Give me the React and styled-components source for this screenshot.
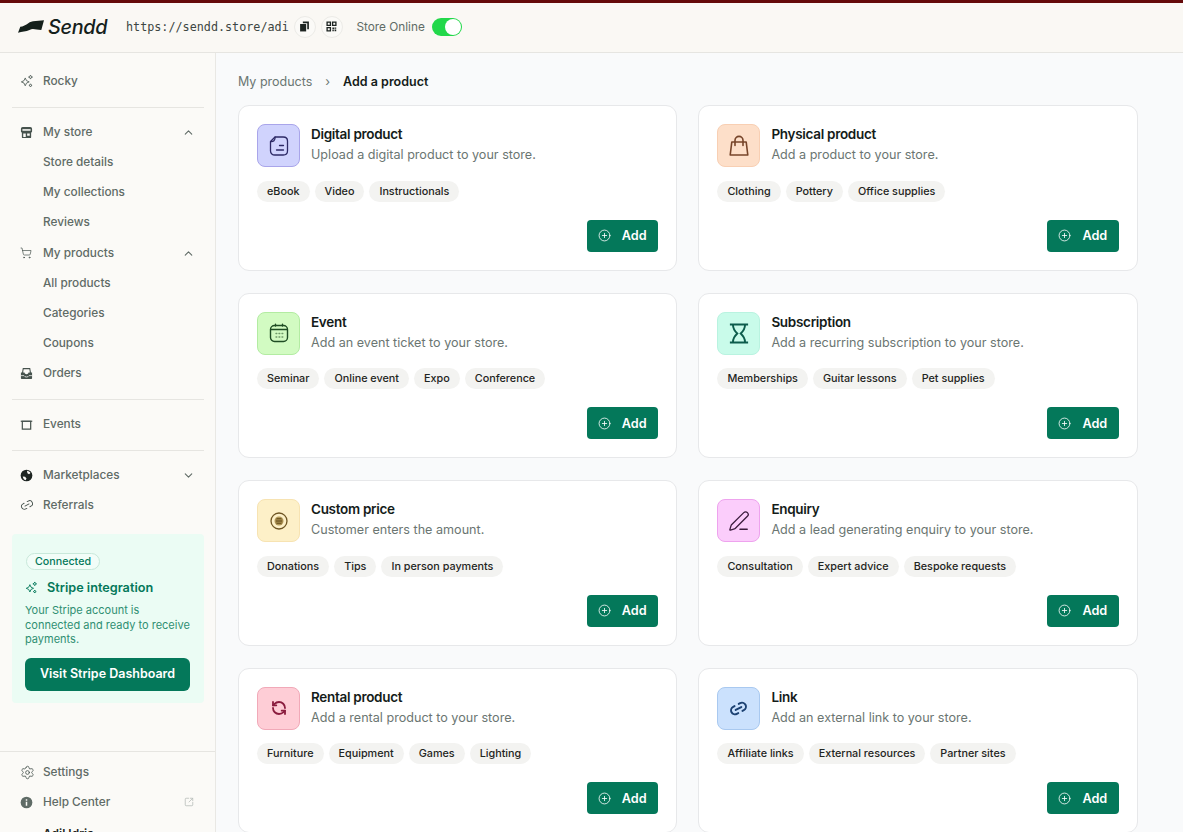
import React from 'react'
import styled, { createGlobalStyle } from 'styled-components'
import {
  ChevronUp, ChevronDown, ShoppingCart, Link2, Settings, SquareArrowOutUpRight,
  CirclePlus, PenLine, RefreshCcw,
} from 'lucide-react'

const Global = createGlobalStyle`
  html, body { margin: 0; padding: 0; height: 100%; overflow: hidden; }
  body { font-family: Inter, "Liberation Sans", sans-serif; background: #fbfaf7; }
  * { box-sizing: border-box; }
`

const Chain = styled(Link2)`
  transform: rotate(-28deg);
`

const Sparkle = ({ size = 14, color = 'currentColor' }) => (
  <svg width={size} height={size} viewBox="0 0 16 16" fill="none" stroke={color} strokeWidth="1.1" strokeLinejoin="round">
    <path d="M6 4.5 7.4 7.6 10.5 9 7.4 10.4 6 13.500 4.600 10.400 1.500 9 4.600 7.600Z" />
    <path d="M12 1.200 12.700 2.800 14.300 3.500 12.700 4.200 12 5.800 11.300 4.200 9.700 3.500 11.300 2.800Z" />
    <path d="M12 11.200 12.600 12.400 13.800 13 12.600 13.600 12 14.800 11.400 13.600 10.200 13 11.400 12.400Z" />
  </svg>
)

const StoreIcon = () => (
  <svg width="13" height="13" viewBox="0 0 14 14" fill="#46524d">
    <path d="M3 1h8c1.300 0 2 1 2 2.200v2.600c0 .7-.4 1.200-1 1.300V12c0 .6-.4 1-1 1H3c-.6 0-1-.4-1-1V7.100c-.6-.1-1-.6-1-1.300V3.200C1 2 1.700 1 3 1Z" />
    <path d="M2.600 3.400h8.800v1.700H2.600Z" fill="#fbfaf7" />
    <path d="M3.500 8.200h2.700v3.600H3.500ZM7.700 8.200h2.800v2.200H7.700Z" fill="#fbfaf7" />
  </svg>
)

const OrdersIcon = () => (
  <svg width="13" height="13" viewBox="0 0 14 14" fill="#46524d">
    <path d="M3 1h8l.8 5H13v6.200c0 .5-.3.800-.8.800H1.800c-.5 0-.8-.3-.8-.8V6h1.200Z" />
    <path d="M3.900 2.500h6.200l.5 3.500H9.200c-.3 1.200-1.100 1.800-2.200 1.800S5.100 7.200 4.800 6H3.400Z" fill="#fbfaf7" />
    <path d="M1 9.300h3.300c.5 1 1.500 1.500 2.700 1.500s2.200-.5 2.700-1.500H13" stroke="#fbfaf7" strokeWidth=".8" fill="none" />
  </svg>
)

const EventsIcon = () => (
  <svg width="13" height="13" viewBox="0 0 14 14" fill="none" stroke="#46524d" strokeWidth="1.300">
    <path d="M2.500 3.500h9v8.500h-9Z" />
    <path d="M.8 3.500h12.400" />
  </svg>
)

const GlobeIcon = () => (
  <svg width="13" height="13" viewBox="0 0 14 14">
    <circle cx="7" cy="7" r="6.300" fill="#1d2421" />
    <path d="M7.500 1.800c1.500.2 3 1 3.800 2.400L9.700 5.600 8 4.700ZM3 8l2.500.3L7 10.200 6 12C4.400 11.600 3.200 10 3 8Z" fill="#fbfaf7" />
  </svg>
)

const InfoIcon = () => (
  <svg width="13" height="13" viewBox="0 0 14 14">
    <circle cx="7" cy="7" r="6.300" fill="#5f6b66" />
    <path d="M6.200 6.200h1.600v4.200H6.200ZM6.200 3.600h1.600v1.500H6.200Z" fill="#fbfaf7" />
  </svg>
)

const CopyIcon = () => (
  <svg width="11" height="11" viewBox="0 0 10 10" fill="#1d2421">
    <path d="M3.500 .5H9v7H7.500V2H3.500Z" />
    <path d="M1 2.700h5.500v6.800H1Z" />
  </svg>
)

const QrIcon = () => (
  <svg width="11" height="11" viewBox="0 0 10 10" fill="none" stroke="#1d2421" strokeWidth="1.200">
    <path d="M1 1h3v3H1ZM6 1h3v3H6ZM1 6h3v3H1Z" />
    <path d="M5.800 5.800h1.600v1.600H5.800ZM7.800 7.800h1.500v1.500H7.800ZM7.800 5.800h1.500v1.300H7.800ZM5.800 7.900h1.300v1.400H5.800Z" fill="#1d2421" stroke="none" />
  </svg>
)

const NoteIcon = () => (
  <svg width="20" height="20" viewBox="0 0 20 20" fill="none" stroke="#2d2a66" strokeWidth="1.300" strokeLinecap="round" strokeLinejoin="round">
    <path d="M6 1h8.200c2.300 0 4.300 1.500 4.300 4v10c0 2.500-2 4-4.300 4H5.800c-2.300 0-4.300-1.500-4.300-4V5.500Z" />
    <path d="M1.600 5.600c2.800.3 4.700-1.200 4.500-4.500" />
    <path d="M10.500 9.500h4M7.500 14h7" />
  </svg>
)

const BagIcon = () => (
  <svg width="22" height="22" viewBox="0 0 22 22" fill="none" stroke="#77452a" strokeWidth="1.600" strokeLinejoin="round" strokeLinecap="round">
    <path d="M3.800 7h14.400l1.600 13H2.200Z" />
    <path d="M7 10.500V5.200C7 3 8.800 1.400 11 1.400s4 1.600 4 3.800v5.300" />
  </svg>
)

const CalIcon = () => (
  <svg width="20" height="20" viewBox="0 0 20 20" fill="none" stroke="#1f4d24" strokeWidth="1.400" strokeLinecap="round">
    <rect x="1.500" y="2.500" width="17" height="16" rx="4" />
    <path d="M2 6.500h16M6.500 1.200V3M13.500 1.200V3" />
    <path d="M7 10.500h.8M10 10.500h.8M13 10.500h.8M7 14h.8M10 14h.8M13 14h.8" stroke="#6f9a68" />
  </svg>
)

const HourIcon = () => (
  <svg width="20" height="21" viewBox="0 0 20 21" fill="none" stroke="#0d5c4c" strokeLinecap="square">
    <path d="M2 1.500h16M2 19.500h16" strokeWidth="2.200" />
    <path d="M4 2c0 3.800 2.200 6.500 4.300 8.500C6.200 12.500 4 15.200 4 19M16 2c0 3.800-2.200 6.500-4.300 8.500 2.100 2 4.300 4.700 4.300 8.500" strokeWidth="1.900" />
  </svg>
)

const CoinIcon = () => (
  <svg width="20" height="20" viewBox="0 0 20 20" fill="none" stroke="#6e5523" strokeWidth="1.300">
    <circle cx="10" cy="10" r="8" />
    <circle cx="10" cy="10" r="4.500" fill="#b09758" stroke="none" />
    <path d="M7.500 7.600h5M6.800 9.200h6.400M6.800 10.800h6.400M7.500 12.400h5" stroke="#6e5523" strokeWidth="1" />
  </svg>
)

const cards = [
  { title: 'Digital product', desc: 'Upload a digital product to your store.', tags: ['eBook', 'Video', 'Instructionals'], bg: '#d0d3fd', line: '#a9a5ea', icon: <NoteIcon /> },
  { title: 'Physical product', desc: 'Add a product to your store.', tags: ['Clothing', 'Pottery', 'Office supplies'], bg: '#fddfc9', line: '#f8cfb3', icon: <BagIcon /> },
  { title: 'Event', desc: 'Add an event ticket to your store.', tags: ['Seminar', 'Online event', 'Expo', 'Conference'], bg: '#d2fbc2', line: '#b3eca2', icon: <CalIcon /> },
  { title: 'Subscription', desc: 'Add a recurring subscription to your store.', tags: ['Memberships', 'Guitar lessons', 'Pet supplies'], bg: '#c9fbea', line: '#b9f3e0', icon: <HourIcon /> },
  { title: 'Custom price', desc: 'Customer enters the amount.', tags: ['Donations', 'Tips', 'In person payments'], bg: '#fdf0c8', line: '#f7e3b2', icon: <CoinIcon /> },
  { title: 'Enquiry', desc: 'Add a lead generating enquiry to your store.', tags: ['Consultation', 'Expert advice', 'Bespoke requests'], bg: '#fbcdfb', line: '#eea3ee', icon: <PenLine size={22} color="#3a1b3c" strokeWidth={1.4} /> },
  { title: 'Rental product', desc: 'Add a rental product to your store.', tags: ['Furniture', 'Equipment', 'Games', 'Lighting'], bg: '#fecdd6', line: '#f1a9b8', icon: <RefreshCcw size={16} color="#8a1c3e" strokeWidth={2.7} /> },
  { title: 'Link', desc: 'Add an external link to your store.', tags: ['Affiliate links', 'External resources', 'Partner sites'], bg: '#cbe1fd', line: '#a9c9f0', icon: <Chain size={19} color="#1d4273" strokeWidth={2.5} /> },
]

const App = () => (
  <Page>
    <Global />
    <TopLine />
    <Header>
      <Logo>
        <svg width="26" height="13" viewBox="0 0 26 13" fill="#14201b">
          <path d="M0 12.700 2.300 6.700C8 6.500 10 2 15 1.300L26 .3 23.300 10C18 10 15 8 11.500 10 8 11.500 4 11.500 0 12.700Z" />
        </svg>
        <LogoText>Sendd</LogoText>
      </Logo>
      <Url>https://sendd.store/adi</Url>
      <RoundBtn><CopyIcon /></RoundBtn>
      <RoundBtn><QrIcon /></RoundBtn>
      <StoreLabel>Store Online</StoreLabel>
      <Toggle><Knob /></Toggle>
    </Header>
    <Body>
      <Sidebar>
        <NavTop>
          <Section>
            <NavItem><NavIcon><Sparkle color="#5f6b66" /></NavIcon>Rocky</NavItem>
          </Section>
          <Section>
            <NavItem><NavIcon><StoreIcon /></NavIcon>My store<Chevron><ChevronUp size={13} /></Chevron></NavItem>
            <NavItem><NavIcon />Store details</NavItem>
            <NavItem><NavIcon />My collections</NavItem>
            <NavItem><NavIcon />Reviews</NavItem>
            <NavItem $push><NavIcon><ShoppingCart size={12} color="#46524d" strokeWidth={1.4} /></NavIcon>My products<Chevron><ChevronUp size={13} /></Chevron></NavItem>
            <NavItem><NavIcon />All products</NavItem>
            <NavItem><NavIcon />Categories</NavItem>
            <NavItem><NavIcon />Coupons</NavItem>
            <NavItem><NavIcon><OrdersIcon /></NavIcon>Orders</NavItem>
          </Section>
          <Section>
            <NavItem><NavIcon><EventsIcon /></NavIcon>Events</NavItem>
          </Section>
          <Section $last>
            <NavItem><NavIcon><GlobeIcon /></NavIcon>Marketplaces<Chevron><ChevronDown size={13} /></Chevron></NavItem>
            <NavItem><NavIcon><Chain size={14} color="#46524d" strokeWidth={1.6} /></NavIcon>Referrals</NavItem>
          </Section>
          <StripeCard>
            <Badge>Connected</Badge>
            <StripeTitle><Sparkle size={13} color="#04785a" />Stripe integration</StripeTitle>
            <StripeText>Your Stripe account is connected and ready to receive payments.</StripeText>
            <StripeButton>Visit Stripe Dashboard</StripeButton>
          </StripeCard>
        </NavTop>
        <NavBottom>
          <NavItem><NavIcon><Settings size={15} color="#46524d" strokeWidth={1.3} /></NavIcon>Settings</NavItem>
          <NavItem><NavIcon><InfoIcon /></NavIcon>Help Center<Chevron><SquareArrowOutUpRight size={10} color="#b9bfbc" /></Chevron></NavItem>
          <UserName>Adil Idris</UserName>
        </NavBottom>
      </Sidebar>
      <Main>
        <Crumbs>
          <CrumbLink>My products</CrumbLink>
          <CrumbSep>›</CrumbSep>
          <CrumbNow>Add a product</CrumbNow>
        </Crumbs>
        <Grid>
          {cards.map((c) => (
            <Card key={c.title}>
              <CardHead>
                <IconBox $bg={c.bg} $line={c.line}>{c.icon}</IconBox>
                <div>
                  <CardTitle>{c.title}</CardTitle>
                  <CardDesc>{c.desc}</CardDesc>
                </div>
              </CardHead>
              <Tags>
                {c.tags.map((t) => <Tag key={t}>{t}</Tag>)}
              </Tags>
              <AddButton><CirclePlus size={13} strokeWidth={1.5} />Add</AddButton>
            </Card>
          ))}
        </Grid>
      </Main>
    </Body>
  </Page>
)

export default App

const Page = styled.div`
  height: 832px;
  overflow: hidden;
  display: flex;
  flex-direction: column;
`
const TopLine = styled.div`
  height: 3px;
  flex: none;
  background: #650a0a;
`
const Header = styled.header`
  height: 50px;
  flex: none;
  display: flex;
  align-items: center;
  padding: 0 0 2px 18px;
  background: #faf8f4;
  border-bottom: 1px solid #e6e5e1;
`
const Logo = styled.div`
  display: flex;
  align-items: center;
  gap: 4px;
  width: 108px;
`
const LogoText = styled.span`
  font-size: 19.8px;
  font-weight: 500;
  font-style: italic;
  color: #14201b;
  letter-spacing: -0.3px;
`
const Url = styled.span`
  font-family: "DejaVu Sans Mono", monospace;
  font-size: 11.75px;
  color: #3d4642;
  margin-right: 5px;
`
const RoundBtn = styled.div`
  width: 22px;
  height: 22px;
  margin-right: 5px;
  border-radius: 50%;
  border: 1px solid #ecebe7;
  background: #fbfaf7;
  display: flex;
  align-items: center;
  justify-content: center;
`
const StoreLabel = styled.span`
  font-size: 11.8px;
  color: #5f6b66;
  margin: 0 7px 0 8.7px;
`
const Toggle = styled.div`
  width: 30px;
  height: 18px;
  border-radius: 9px;
  background: #22d84a;
  position: relative;
`
const Knob = styled.div`
  position: absolute;
  right: 1px;
  top: 1px;
  width: 16px;
  height: 16px;
  border-radius: 50%;
  background: #fff;
`
const Body = styled.div`
  flex: 1;
  min-height: 0;
  display: flex;
`
const Sidebar = styled.aside`
  width: 216px;
  flex: none;
  display: flex;
  flex-direction: column;
  justify-content: space-between;
  background: #fbfaf7;
  border-right: 1px solid #e9e8e4;
`
const NavTop = styled.div`
  padding: 12px 11px 0 12px;
`
const Section = styled.div`
  padding-bottom: ${(p) => (p.$last ? '0' : '12px')};
  margin-bottom: ${(p) => (p.$last ? '0' : '8px')};
  border-bottom: ${(p) => (p.$last ? 'none' : '1px solid #e6e5e1')};
`
const NavItem = styled.div`
  height: 30px;
  padding-top: 2px;
  margin-top: ${(p) => (p.$push ? '1px' : '0')};
  display: flex;
  align-items: center;
  font-size: 11.8px;
  font-weight: 500;
  color: #5f6b66;
`
const NavIcon = styled.span`
  width: 31px;
  flex: none;
  display: flex;
  align-items: center;
  padding-left: 8px;
`
const Chevron = styled.span`
  margin-left: auto;
  margin-right: 9px;
  display: flex;
  color: #5f6b66;
`
const StripeCard = styled.div`
  margin-top: 15px;
  height: 169px;
  padding: 19px 14px 0 13px;
  background: #ebfcf4;
  border-radius: 4px;
`
const Badge = styled.div`
  width: fit-content;
  height: 17px;
  margin-left: 1px;
  line-height: 15px;
  padding: 0 8px;
  font-size: 10.7px;
  font-weight: 500;
  color: #04785a;
  border: 1px solid #c9e8da;
  border-radius: 9px;
  background: #f2fdf8;
`
const StripeTitle = styled.div`
  display: flex;
  align-items: center;
  gap: 9px;
  height: 16px;
  margin-top: 9px;
  font-size: 12.7px;
  font-weight: 600;
  color: #04785a;
`
const StripeText = styled.p`
  margin: 8px 0 11px;
  font-size: 11px;
  line-height: 14.7px;
  color: #2f8f72;
`
const StripeButton = styled.div`
  height: 33px;
  padding-bottom: 2px;
  display: flex;
  align-items: center;
  justify-content: center;
  border-radius: 6px;
  font-size: 12.5px;
  font-weight: 600;
  color: #fff;
  background: #04785a;
`
const NavBottom = styled.div`
  height: 81px;
  flex: none;
  padding: 4px 12px 0;
  border-top: 1px solid #e6e5e1;
`
const UserName = styled.div`
  margin: 10px 0 0 31px;
  font-size: 12px;
  font-weight: 600;
  color: #1d2421;
`
const Main = styled.main`
  flex: 1;
  min-width: 0;
  padding: 0 45px 0 22px;
  background: #f9fafb;
`
const Crumbs = styled.nav`
  height: 52px;
  padding-top: 4px;
  display: flex;
  align-items: center;
  font-size: 12.5px;
`
const CrumbLink = styled.span`
  color: #6b7672;
`
const CrumbSep = styled.span`
  margin: 0 13px;
  color: #6b7672;
`
const CrumbNow = styled.span`
  font-weight: 600;
  color: #141c19;
`
const Grid = styled.div`
  display: grid;
  grid-template-columns: 439.4px 1fr;
  grid-auto-rows: 165.5px;
  gap: 22px 21px;
`
const Card = styled.article`
  display: flex;
  flex-direction: column;
  padding: 18px;
  background: #fff;
  border: 1px solid #e7e8ea;
  border-radius: 11px;
`
const CardHead = styled.div`
  display: flex;
  gap: 11px;
`
const IconBox = styled.div`
  width: 43px;
  height: 43px;
  flex: none;
  display: flex;
  align-items: center;
  justify-content: center;
  border-radius: 8px;
  background: ${(p) => p.$bg};
  border: 1px solid ${(p) => p.$line};
`
const CardTitle = styled.div`
  margin-top: 1px;
  font-size: 13.5px;
  line-height: 19px;
  font-weight: 600;
  letter-spacing: -0.3px;
  color: #141c19;
`
const CardDesc = styled.div`
  margin-top: 1px;
  font-size: 12.6px;
  line-height: 19px;
  color: #6b7672;
`
const Tags = styled.div`
  display: flex;
  gap: 5px;
  margin-top: 13.7px;
`
const Tag = styled.span`
  height: 21px;
  padding: 0 10px;
  display: flex;
  align-items: center;
  font-size: 10.8px;
  font-weight: 500;
  color: #1f2522;
  border-radius: 11px;
  background: #f3f3f1;
`
const AddButton = styled.div`
  align-self: flex-end;
  margin-top: auto;
  width: 71.6px;
  height: 32px;
  display: flex;
  align-items: center;
  gap: 11px;
  padding-left: 11px;
  font-size: 12.7px;
  font-weight: 600;
  color: #fff;
  border-radius: 4px;
  background: #04785a;
`
